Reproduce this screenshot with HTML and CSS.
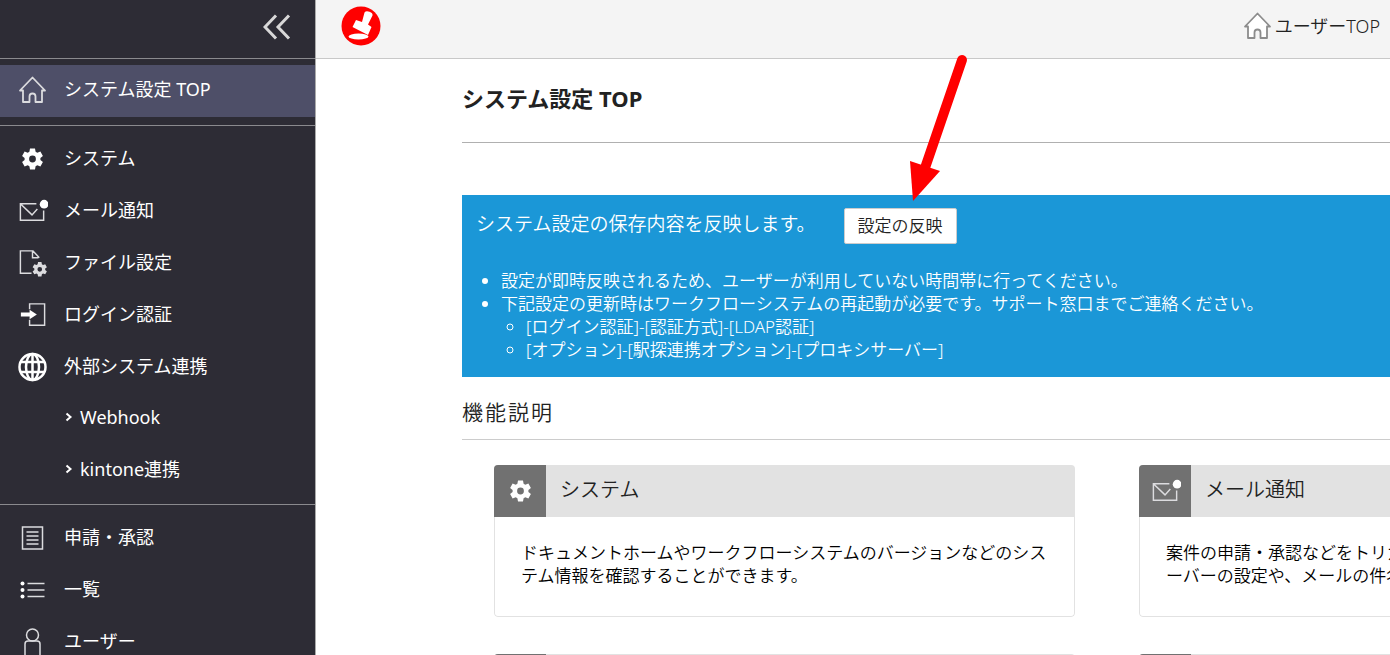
FILE: index.html
```html
<!DOCTYPE html>
<html lang="ja">
<head>
    <meta charset="UTF-8">
    <meta name="viewport" content="width=device-width, initial-scale=1.0">
    <title>システム設定 TOP</title>
    <link rel="stylesheet" href="styles.css">
</head>
<body>
    <!-- Shared icons -->
    <svg class="defs" aria-hidden="true">
        <symbol id="home" viewBox="0 0 30 30">
            <path d="M2.500 15.500 15 2.500l12.500 13h-3V27h-6.500v-5.500a3 3 0 0 0-6 0V27H5.500V15.500z" stroke="currentColor" stroke-width="1.800" stroke-linejoin="round"/>
        </symbol>
        <symbol id="gear" viewBox="0 0 24 24">
            <path fill="currentColor" fill-rule="evenodd" d="M9.500 1.500h5l.6 3.200 1.700 1 3.100-1.100 2.500 4.300-2.500 2.100v2l2.500 2.100-2.500 4.300-3.100-1.100-1.700 1-.6 3.200h-5l-.6-3.200-1.700-1-3.100 1.100-2.500-4.300L4.100 13v-2L1.600 8.900l2.500-4.300 3.100 1.100 1.700-1zM12 8.600a3.400 3.400 0 1 0 0 6.800 3.400 3.400 0 0 0 0-6.800z"/>
        </symbol>
        <symbol id="mail" viewBox="0 0 32 30">
            <path d="M20 7.500H3.500v17h24v-10M4 8l11.500 11L21 13" fill="none" stroke="currentColor" stroke-width="1.500"/>
            <circle cx="28" cy="8" r="4.500" fill="#fff"/>
        </symbol>
        <symbol id="file" viewBox="0 0 32 30">
            <path d="M15 25.500H3.500v-23h13l6.500 7M16 3v6.500h6" fill="none" stroke="currentColor" stroke-width="1.500"/>
            <svg x="15" y="13" width="17" height="17"><use href="#gear"/></svg>
        </symbol>
        <symbol id="login" viewBox="0 0 32 30">
            <path d="M13 9V3.500h15.500v22H13V20" fill="none" stroke="currentColor" stroke-width="1.500"/>
            <path d="M4 12.500h9V9.500l7.500 5-7.500 5v-3H4z" fill="#fff"/>
        </symbol>
        <symbol id="globe" viewBox="0 0 30 30">
            <g fill="none" stroke="currentColor" stroke-width="2.500">
                <circle cx="15" cy="15" r="13"/>
                <ellipse cx="15" cy="15" rx="6.500" ry="13"/>
                <path d="M15 2v26M3.500 10h23M3.500 20h23"/>
            </g>
        </symbol>
        <symbol id="doc" viewBox="0 0 30 30">
            <path d="M5 4h20v22H5z" fill="none" stroke="currentColor" stroke-width="1.500"/>
            <path d="M9 9h12M9 13h12M9 17h12M9 21h12" stroke="currentColor" stroke-width="1.500"/>
        </symbol>
        <symbol id="list" viewBox="0 0 30 30">
            <path d="M10 8.500h17M10 15h17M10 21.500h17" stroke="currentColor" stroke-width="1.500"/>
            <g fill="#fff"><circle cx="5" cy="8.500" r="2"/><circle cx="5" cy="15" r="2"/><circle cx="5" cy="21.500" r="2"/></g>
        </symbol>
        <symbol id="user" viewBox="0 0 30 30">
            <g fill="none" stroke="currentColor" stroke-width="1.500">
                <circle cx="15" cy="8" r="6"/>
                <path d="M7.500 30V17q0-3 3-3h9q3 0 3 3v13"/>
            </g>
        </symbol>
    </svg>

    <div class="layout">
        <aside class="sidebar">
            <div class="sidebar-head">
                <button class="toggle" type="button" aria-label="メニューを閉じる">
                    <svg width="28" height="26" viewBox="0 0 28 26"><path d="M13 1.500 2 13l11 11.500M26 1.500 15 13l11 11.500" fill="none" stroke="#d8d8d8" stroke-width="3"/></svg>
                </button>
            </div>
            <nav>
                <div class="group top">
                    <a class="item active" href="#"><svg class="icon"><use href="#home"/></svg>システム設定 TOP</a>
                </div>
                <div class="group">
                    <a class="item" href="#"><svg class="icon solid"><use href="#gear"/></svg>システム</a>
                    <a class="item" href="#"><svg class="icon"><use href="#mail"/></svg>メール通知</a>
                    <a class="item" href="#"><svg class="icon"><use href="#file"/></svg>ファイル設定</a>
                    <a class="item" href="#"><svg class="icon"><use href="#login"/></svg>ログイン認証</a>
                    <a class="item" href="#"><svg class="icon bright"><use href="#globe"/></svg>外部システム連携</a>
                    <a class="item sub" href="#"><svg class="arrow" viewBox="0 0 8 10"><path d="m1.500 1.500 4 3.500-4 3.500"/></svg>Webhook</a>
                    <a class="item sub" href="#"><svg class="arrow" viewBox="0 0 8 10"><path d="m1.500 1.500 4 3.500-4 3.500"/></svg>kintone連携</a>
                </div>
                <div class="group">
                    <a class="item" href="#"><svg class="icon"><use href="#doc"/></svg>申請・承認</a>
                    <a class="item" href="#"><svg class="icon"><use href="#list"/></svg>一覧</a>
                    <a class="item" href="#"><svg class="icon"><use href="#user"/></svg>ユーザー</a>
                </div>
            </nav>
        </aside>

        <div class="page">
            <header class="topbar">
                <a class="logo" href="#" aria-label="ホーム">
                    <svg width="40" height="40" viewBox="0 0 40 40">
                        <circle cx="20" cy="20" r="19.500" fill="#f00"/>
                        <path d="M23.500 6.500q1.500-2 5-.7 3.500 1.300 3 3.700l-4.500 9 3.500 2.500-3.500 8L11.500 21l3.500-7 6 2z" fill="#fff"/>
                        <ellipse cx="17.500" cy="30.500" rx="10" ry="3" fill="#fff"/>
                    </svg>
                </a>
                <a class="user-top" href="#"><svg class="icon"><use href="#home"/></svg>ユーザーTOP</a>
            </header>

            <main class="content">
                <h1>システム設定 TOP</h1>

                <section class="notice">
                    <div class="notice-head">
                        <p>システム設定の保存内容を反映します。</p>
                        <div class="apply">
                            <button class="btn" type="button">設定の反映</button>
                            <svg class="pointer" width="60" height="150" viewBox="0 0 60 150" aria-hidden="true">
                                <path d="M52 10 15 118" stroke="#f00" stroke-width="10" stroke-linecap="round"/>
                                <path d="M0 111l30 10L3 151z" fill="#f00"/>
                            </svg>
                        </div>
                    </div>
                    <ul>
                        <li>設定が即時反映されるため、ユーザーが利用していない時間帯に行ってください。</li>
                        <li>下記設定の更新時はワークフローシステムの再起動が必要です。サポート窓口までご連絡ください。
                            <ul>
                                <li>[ログイン認証]-[認証方式]-[LDAP認証]</li>
                                <li>[オプション]-[駅探連携オプション]-[プロキシサーバー]</li>
                            </ul>
                        </li>
                    </ul>
                </section>

                <h2>機能説明</h2>

                <div class="cards">
                    <section class="card">
                        <h3><span class="card-icon"><svg class="icon solid"><use href="#gear"/></svg></span><span class="card-title">システム</span></h3>
                        <p>ドキュメントホームやワークフローシステムのバージョンなどのシステム情報を確認することができます。</p>
                    </section>
                    <section class="card">
                        <h3><span class="card-icon"><svg class="icon"><use href="#mail"/></svg></span><span class="card-title">メール通知</span></h3>
                        <p>案件の申請・承認などをトリガーとして送信されるメールの送信用サーバーの設定や、メールの件名・本文を設定することができます。</p>
                    </section>
                    <section class="card">
                        <h3><span class="card-icon"></span></h3>
                    </section>
                    <section class="card">
                        <h3><span class="card-icon"></span></h3>
                    </section>
                </div>
            </main>
        </div>
    </div>
</body>
</html>
```
FILE: styles.css
```css
* {
    box-sizing: border-box;
}
body {
    margin: 0;
    font-family: "Noto Sans", "Noto Sans CJK JP", sans-serif;
    font-size: 17px;
    line-height: 23px;
    color: #000;
    background: #fff;
    overflow: hidden;
}
h1, h2, h3, p, ul {
    margin: 0;
}
a {
    color: inherit;
    text-decoration: none;
}
.defs {
    position: absolute;
    width: 0;
    height: 0;
}
.layout {
    display: flex;
    height: 100vh;
}

/* Sidebar */
.sidebar {
    flex: 0 0 316px;
    background: #2d2c35;
    border-right: 1px solid #aaa;
    color: #fff;
    overflow: hidden;
}
.sidebar-head {
    display: flex;
    align-items: center;
    justify-content: flex-end;
    height: 59px;
    padding: 0 24px 4px 0;
    border-bottom: 1px solid #8a8a8e;
}
.toggle {
    display: flex;
    padding: 0;
    border: 0;
    background: none;
    cursor: pointer;
}
.group {
    padding: 7px 0;
    border-bottom: 1px solid #8a8a8e;
}
.group.top {
    padding: 6px 0 8px;
}
.item {
    display: flex;
    align-items: center;
    gap: 16px;
    height: 52px;
    padding: 0 17px 2px;
    font-size: 18px;
}
.item .icon {
    margin-top: 2px;
}
.item.active {
    padding-bottom: 4px;
    background: #4e4f68;
}
.item.sub {
    gap: 7px;
    padding-bottom: 4px;
    padding-left: 65px;
}
.icon {
    flex: none;
    width: 31px;
    height: 30px;
    color: #dcdcdf;
    fill: none;
}
.icon.solid {
    height: 24px;
    color: #fff;
}
.icon.bright {
    color: #fff;
}
.arrow {
    width: 8px;
    height: 10px;
    fill: none;
    stroke: #fff;
    stroke-width: 2;
}

/* Header */
.page {
    flex: 1;
    min-width: 0;
    overflow: hidden;
}
.topbar {
    display: flex;
    align-items: center;
    justify-content: space-between;
    height: 59px;
    padding: 0 10px 6px 25px;
    background: #f4f4f4;
    border-bottom: 1px solid #c8c8c8;
}
.logo {
    display: flex;
}
.user-top {
    display: flex;
    align-items: center;
    gap: 2px;
    font-size: 18px;
    font-weight: 350;
    color: #222;
}
.user-top .icon {
    color: #8c8c8c;
    fill: #fff;
}

/* Content */
.content {
    padding-left: 146px;
    font-weight: 350;
}
h1 {
    padding: 23px 0 28px;
    border-bottom: 1px solid #b0b0b0;
    font-size: 22px;
    line-height: 32px;
    color: #222;
}
.notice {
    margin-top: 52px;
    padding: 13px 14px 16px;
    background: #1b97d7;
    color: #fff;
}
.notice-head {
    display: flex;
    align-items: center;
    gap: 28px;
    margin-bottom: 25px;
    font-size: 19px;
}
.notice-head p {
    padding-bottom: 4px;
}
.apply {
    position: relative;
}
.btn {
    display: block;
    height: 36px;
    padding: 0 13px 2px;
    border: 1px solid #ccc;
    border-radius: 2px;
    background: #fff;
    color: #222;
    font: inherit;
    font-size: 17px;
}
.pointer {
    position: absolute;
    left: 66px;
    bottom: 44px;
    overflow: visible;
    pointer-events: none;
}
.notice ul {
    padding-left: 25px;
}
h2 {
    padding: 19px 0 11px;
    border-bottom: 1px solid #ccc;
    font-size: 21px;
    font-weight: 350;
    line-height: 32px;
    letter-spacing: 2px;
    color: #222;
}
.cards {
    display: grid;
    grid-template-columns: repeat(2, 581px);
    gap: 37px 64px;
    padding: 25px 32px;
}
.card {
    border-radius: 4px;
    overflow: hidden;
}
.card h3 {
    display: flex;
    align-items: center;
    gap: 14px;
    height: 52px;
    background: #e2e2e2;
    font-size: 20px;
    font-weight: 350;
    color: #222;
}
.card-title {
    padding-bottom: 4px;
}
.card-icon {
    display: flex;
    align-items: center;
    justify-content: center;
    width: 52px;
    height: 52px;
    background: #717171;
}
.card p {
    min-height: 100px;
    padding: 24px 26px;
    border: 1px solid #e2e2e2;
    border-top: 0;
    border-radius: 0 0 4px 4px;
    line-break: loose;
}
```
